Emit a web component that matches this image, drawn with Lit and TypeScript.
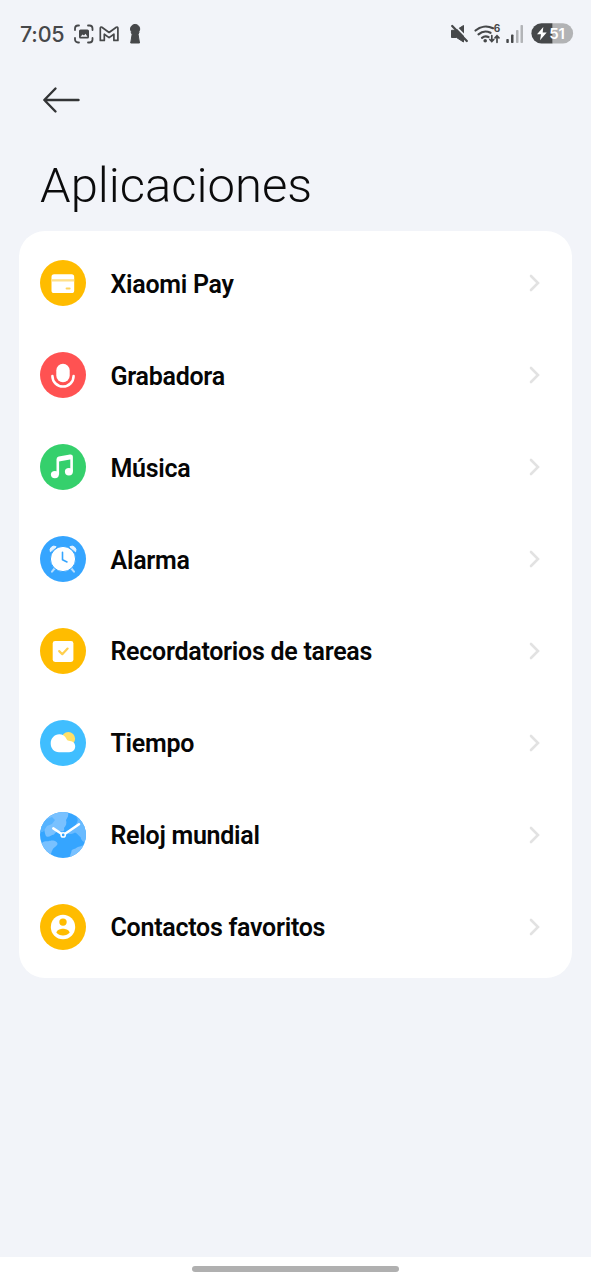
import { LitElement, html, svg, css } from "lit";
import { customElement } from "lit/decorators.js";

const icons = {
  pay: svg`<circle cx="23" cy="23" r="23" fill="#ffbc00"/>
    <rect x="11.5" y="14.3" width="22.7" height="18.7" rx="2.6" fill="#fff"/>
    <rect x="11.5" y="19.2" width="22.7" height="2.3" fill="#ffe08a"/>
    <rect x="25.6" y="27.6" width="5" height="1.9" rx=".95" fill="#ffd45c"/>`,
  mic: svg`<circle cx="23" cy="23" r="23" fill="#ff5252"/>
    <rect x="16.3" y="11.7" width="13.400" height="18.500" rx="6.700" fill="#fff"/>
    <path d="M12.4 24a10.6 10.6 0 0 0 21.2 0" fill="none" stroke="#fff" stroke-width="2.500" stroke-linecap="round"/>`,
  music: svg`<circle cx="23" cy="23" r="23" fill="#35d06c"/>
    <path d="M17.800 30.500V15.200Q17.800 14 19 13.700L30.200 11.800Q31.600 11.600 31.600 13V27.500" fill="none" stroke="#fff" stroke-width="2.600" stroke-linejoin="round"/>
    <path d="M17.500 14L31.500 11.500V15.200L17.500 17.700z" fill="#fff"/>
    <ellipse cx="14.900" cy="30.600" rx="4" ry="3.700" fill="#fff"/>
    <ellipse cx="28.900" cy="27.700" rx="4" ry="3.700" fill="#fff"/>`,
  alarm: svg`<circle cx="23" cy="23" r="23" fill="#35a5ff"/>
    <path d="M14.6 32.5L12 35.7M31.4 32.5L34 35.7" stroke="#b8dfff" stroke-width="2" stroke-linecap="round"/>
    <path d="M10.4 15.8a4 4 0 0 1 5.8-5zM35.6 15.8a4 4 0 0 0-5.8-5z" fill="#e6f4ff" stroke="#e6f4ff" stroke-width="1" stroke-linejoin="round"/>
    <circle cx="23" cy="23" r="12.6" fill="#fff" stroke="#35a5ff" stroke-width="1"/>
    <path d="M22.5 16.2V23.8L27 26" fill="none" stroke="#35a5ff" stroke-width="1.6" stroke-linecap="round" stroke-linejoin="round"/>`,
  task: svg`<circle cx="23" cy="23" r="23" fill="#ffbc00"/>
    <rect x="12.7" y="13" width="20.7" height="20.9" rx="2.4" fill="#fff"/>
    <path d="M19.2 23.1L22.3 26.2L27.6 20.6" fill="none" stroke="#ffcf4d" stroke-width="2.200" stroke-linecap="round" stroke-linejoin="round"/>`,
  weather: svg`<circle cx="23" cy="23" r="23" fill="#40beff"/>
    <circle cx="28.3" cy="18.8" r="6.8" fill="#ffe066"/>
    <path d="M19 32.200C14 32.200 10.700 28.300 10.700 23.500C10.700 18.300 14.500 14.300 19.200 14.300C22.500 14.300 25.300 16.200 26.500 19C27.200 20.500 28.300 20.900 30 20.900C33 21 35.200 23.200 35.200 26.300C35.200 29.800 32.800 32.200 29.200 32.200z" fill="#fff"/>`,
  world: svg`<clipPath id="globe"><circle cx="23" cy="23" r="23"/></clipPath>
    <g clip-path="url(#globe)">
      <rect width="46" height="46" fill="#35a5ff"/>
      <path d="M9 3L18 0H28C29 3 27.500 6 26 8C27 11 26 14 24 16C25 19 23 20 20 19C17 19 15.500 20.500 14 22.500C11 23 9.500 25.500 6.500 24.500C4.500 22.500 5 18 3.500 16H0V8z" fill="#79c1ff"/>
      <path d="M2 9L12 5L15 8L12 12L7 14L3 20H0z" fill="#56b3ff"/>
      <path d="M34 0L46 8V31C43 30 41 28 40.500 25C38.500 24 37 21 35 20.500C32 22 29 23 27.500 21C29 18.500 33 17.500 35 15C36 11 39 9 37 6z" fill="#68baff"/>
      <path d="M2 31C5 28 9 30 11 28.500C14 28 17.500 29.500 17.500 32C16.500 35 13 35.500 12.500 38C11 40 12 42 9 43L0 38z" fill="#79c1ff"/>
      <path d="M30 46C30 42 31.500 41 31.500 38.500C33 36.500 35 37.500 37 35.500C39.500 34 41.500 34.500 46 32V46z" fill="#79c1ff"/>
    </g>
    <path d="M13.300 16.400L21.400 21.700M25.500 21.500L39 12.300" stroke="#fff" stroke-width="2.500" stroke-linecap="round"/>
    <circle cx="23.200" cy="22.900" r="2.100" fill="#35a5ff" stroke="#fff" stroke-width="1.500"/>`,
  contact: svg`<circle cx="23" cy="23" r="23" fill="#ffbc00"/>
    <circle cx="23" cy="23" r="12.200" fill="#fff"/>
    <circle cx="23" cy="18.100" r="3.700" fill="#ffbc00"/>
    <path d="M16.300 28.500C17.500 25.500 20.500 24.800 23 24.800s5.500.7 6.700 3.700C28.200 30.500 25.800 31.500 23 31.500s-5.200-1-6.700-3z" fill="#ffbc00"/>`,
};

const apps = [
  { name: "Xiaomi Pay", icon: icons.pay },
  { name: "Grabadora", icon: icons.mic },
  { name: "Música", icon: icons.music },
  { name: "Alarma", icon: icons.alarm },
  { name: "Recordatorios de tareas", icon: icons.task },
  { name: "Tiempo", icon: icons.weather },
  { name: "Reloj mundial", icon: icons.world },
  { name: "Contactos favoritos", icon: icons.contact },
];

@customElement("status-bar")
class StatusBar extends LitElement {
  static styles = css`
    :host { display: flex; align-items: center; height: 67px; padding: 0 17px 0 20px; color: #46484a; }
    .time { font: 500 21.500px/24px "Inter", sans-serif; letter-spacing: -0.2px; width: 54px; white-space: nowrap; }
    .left { flex: 1; }
    svg { display: block; }
    .small { font: 700 10px "Inter", sans-serif; }
    .level { font: 600 15px "Inter", sans-serif; }
  `;
  render() {
    return html`
      <span class="time">7:05</span>
      <svg class="left" width="70" height="24" viewBox="0 0 70 24" preserveAspectRatio="xMinYMid">
        <g fill="none" stroke="#46484a" stroke-width="1.8" stroke-linecap="round" stroke-linejoin="round">
          <path d="M1 8V6.500a3 3 0 0 1 3-3H5M14 3.500h1.500a3 3 0 0 1 3 3V8M18.500 16v1.500a3 3 0 0 1-3 3H14M5 20.500H4a3 3 0 0 1-3-3V16"/>
          <path d="M26.300 18.400V6.200q0-1.600 1.600-1l7.200 5.300 7.200-5.300q1.600-.6 1.600 1v12.200H39.900V12.200L35.100 15.600L30.300 12.200V18.400z" stroke-width="1.700"/>
        </g>
        <rect x="5" y="7.500" width="10" height="9" rx="1.500" fill="#46484a"/>
        <path d="M6.500 14.700l2-2.200 1.500 1 1.500-1.800 2 3z" fill="#f2f4f9"/>
        <path d="M56.700 21L58.200 12L57.300 11V9.500A4.200 4.200 0 0 1 56.500 7a4.600 4.600 0 0 1 9.200 0a4.200 4.200 0 0 1-.8 2.500V11L64 12L65.500 21z" fill="#46484a" stroke="#46484a" stroke-linejoin="round"/>
      </svg>
      <svg width="124" height="24" viewBox="0 0 124 24">
        <path d="M1.500 8.300H6L13.500 3.500V20L6.500 15.500H1.500z" fill="#46484a" stroke="#46484a" stroke-linejoin="round"/>
        <path d="M4.500 3.200L19 17.800" stroke="#f2f4f9" stroke-width="1.800"/>
        <path d="M2.200 4L16.800 19" stroke="#46484a" stroke-width="2.300" stroke-linecap="round"/>
        <g fill="none" stroke="#46484a" stroke-width="2.200" stroke-linecap="round">
          <path d="M25.500 8.500a16 16 0 0 1 17.500-2.300M28.500 12.300a11 11 0 0 1 12-1.500M32 15.800a6 6 0 0 1 6.500-.7"/>
          <path d="M41.800 13.500V19.300M39.800 17.500l2 2 2-2M47 20.300V14M45 15.800l2-2 2 2" stroke-width="1.700"/>
        </g>
        <circle cx="35.200" cy="18.800" r="1.800" fill="#46484a"/>
        <text class="small" x="43.800" y="9.800" fill="#46484a">6</text>
        <rect x="56.300" y="17" width="2.500" height="4" rx=".8" fill="#46484a"/>
        <rect x="61" y="12.500" width="2.500" height="8.500" rx=".8" fill="#46484a"/>
        <rect x="66" y="8" width="2.500" height="13" rx=".8" fill="#b2b4b7"/>
        <rect x="70.500" y="3" width="2.500" height="18" rx=".8" fill="#b2b4b7"/>
        <path d="M102.500 1.300H113a10.100 10.100 0 0 1 0 20.200H102.500z" fill="#b2b3b5"/>
        <path d="M102.500 1.300H91.500a10.100 10.100 0 0 0 0 20.200H102.500z" fill="#46484a"/>
        <path d="M93.300 5L87 12.200H91L90 18.200L96.700 10.500H92.700z" fill="#fff"/>
        <text class="level" x="99.200" y="16.800" fill="#fff">51</text>
      </svg>`;
  }
}

@customElement("app-row")
class AppRow extends LitElement {
  static properties = { name: {}, icon: { attribute: false } };
  static styles = css`
    :host { display: flex; align-items: center; height: 91.900px; padding: 0 29.400px 0 21px; }
    svg { display: block; flex: none; }
    .name { flex: 1; margin-left: 24.500px; padding-top: 3px; font: 600 25px/30px Roboto, sans-serif; letter-spacing: -0.270px; color: #060606; white-space: nowrap; }
  `;
  render() {
    const row = this as any;
    return html`
      <svg width="46" height="46" viewBox="0 0 46 46">${row.icon}</svg>
      <span class="name">${row.name}</span>
      <svg width="16" height="20" viewBox="0 0 16 20">
        <path d="M4 3L11 10L4 17" fill="none" stroke="#e2e2e2" stroke-width="2.600" stroke-linecap="round"/>
      </svg>`;
  }
}

@customElement("app-root")
class AppRoot extends LitElement {
  static styles = css`
    :host { display: flex; flex-direction: column; height: 1280px; background: #f2f4f9; overflow: hidden; }
    .back { display: block; margin: 18px 0 0 42px; }
    .title { margin: 41px 0 0 40px; font: 300 49px/60px Roboto, sans-serif; color: #0b0b0c; height: 75.400px; white-space: nowrap; }
    .card { margin: 0 19px; padding: 6px 0 5.400px; border-radius: 26px; background: #fff; }
    .nav { margin-top: auto; height: 23px; background: #fff; display: flex; justify-content: center; align-items: center; }
    .handle { width: 207px; height: 6px; border-radius: 3px; background: #b0b0b0; }
  `;
  render() {
    return html`
      <status-bar></status-bar>
      <svg class="back" width="40" height="30" viewBox="0 0 40 30">
        <path d="M36.500 15H2.500M13.500 3.500L2.300 15L13.500 26.500" fill="none" stroke="#333436" stroke-width="2.400" stroke-linecap="round" stroke-linejoin="round"/>
      </svg>
      <div class="title">Aplicaciones</div>
      <div class="card">${apps.map((a) => html`<app-row .name=${a.name} .icon=${a.icon}></app-row>`)}</div>
      <div class="nav"><div class="handle"></div></div>`;
  }
}
